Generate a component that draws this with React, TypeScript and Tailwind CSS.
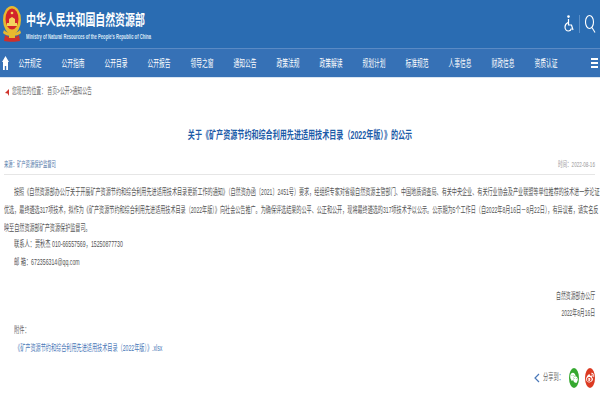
import { FaWeibo, FaWeixin } from 'react-icons/fa';

const cjk = 'font-["Liberation_Sans","Noto_Sans_CJK_SC",sans-serif]';

const navItems = ['公开规定', '公开指南', '公开目录', '公开报告', '领导之窗', '通知公告', '政策法规', '政策解读', '规划计划', '标准规范', '人事信息', '财政信息', '资质认证'];

function Emblem() {
  return (
    <svg width="18" height="36" viewBox="0 0 18 36" className="shrink-0">
      <ellipse cx="9" cy="14" rx="9" ry="14" fill="#e8b92f" />
      <ellipse cx="9" cy="13" rx="6.5" ry="10.5" fill="#d3242a" />
      <path d="M4 17h10v3H4z" fill="#f4d35e" />
      <path d="M6 17v-4l3-2 3 2v4z" fill="#f4d35e" />
      <circle cx="9" cy="7" r="1.3" fill="#f4d35e" />
      <path d="M1 24c3 4 13 4 16 0l1 3c-3 4-15 4-18 0z" fill="#e8b92f" />
      <path d="M2 29c4 3 10 3 14 0l1 6c-4 1-12 1-16 0z" fill="#cf2f2a" />
      <path d="M6 29h6v3H6z" fill="#e8b92f" />
    </svg>
  );
}

export default function App() {
  return (
    <div className={`w-[600px] h-[400px] overflow-hidden bg-white ${cjk}`}>
      {/* header */}
      <div className="h-[48px] bg-[#2a6cb2] flex items-start pl-[3px] pt-[6px] pr-[2px]">
        <Emblem />
        <div className="ml-[5px]">
          <div className="w-[118px] h-[16px] mt-[6px] text-[15px] leading-[16px] font-bold text-white whitespace-nowrap origin-left scale-x-[.66]">中华人民共和国自然资源部</div>
          <div className="h-[8px] mt-[5px] text-[7px] leading-[8px] font-bold text-[#dbe7f5] whitespace-nowrap origin-left scale-x-[.59]">Ministry of Natural Resources of the People&apos;s Republic of China</div>
        </div>
        <div className="ml-auto flex items-center mt-[8px]">
          <svg width="10" height="18" viewBox="0 0 10 18" fill="none" stroke="white" strokeWidth="1.2">
            <circle cx="4.5" cy="1.6" r="1.3" fill="white" stroke="none" />
            <path d="M4.5 4v6h3l1.5 5" />
            <path d="M4 7.5C2 8.5 1 10 1 12c0 2 1.500 4 3.500 4 1.500 0 2.500-1 3-2.500" />
          </svg>
          <div className="w-px h-[18px] bg-[#5a8fc8] mx-[5px]" />
          <svg width="11" height="20" viewBox="0 0 11 20" fill="none" stroke="white" strokeWidth="1.1" className="mr-[2px]">
            <ellipse cx="4.500" cy="8" rx="4" ry="6.500" />
            <path d="M7 13.500l3 5" />
          </svg>
        </div>
      </div>

      {/* nav */}
      <div className="h-[29px] bg-[#3671b6] border-t border-[#5a8ac4] flex items-center pl-[2px] pr-[2px]">
        <svg width="7" height="14" viewBox="0 0 7 14" fill="white" className="shrink-0 mr-[-1px]">
          <path d="M3.500 0L7 6H6v8H4.200v-4H2.800v4H1V6H0z" />
        </svg>
        {navItems.map((item) => (
          <div key={item} className="w-[43px] flex justify-center shrink-0">
            <span className="mt-[1px] text-[10px] leading-[12px] text-white whitespace-nowrap scale-x-[.575]">{item}</span>
          </div>
        ))}
        <div className="ml-auto flex flex-col gap-[2px] w-[7px] shrink-0">
          <div className="h-[2px] bg-white" />
          <div className="h-[2px] bg-white" />
          <div className="h-[2px] bg-white" />
        </div>
      </div>

      <div className="h-[1px] bg-[#d9e5f2]" />

      {/* breadcrumb */}
      <div className="flex items-center h-[28px] pl-[5px]">
        <svg width="4" height="7" viewBox="0 0 4 7" fill="#d0342c" className="mr-[3px]">
          <path d="M4 0v7L2.500 4.500 0 4z" />
        </svg>
        <span className="text-[9px] text-[#666] whitespace-nowrap origin-left scale-x-[.54]">您现在的位置：&nbsp;首页&gt;公开&gt;通知公告</span>
      </div>

      {/* title */}
      <div className="mt-[22px] h-[14px] text-center text-[11px] leading-[14px] font-bold text-[#1c5ba8] whitespace-nowrap scale-x-[.643]">关于《矿产资源节约和综合利用先进适用技术目录（2022年版）》的公示</div>

      {/* source / time */}
      <div className="mt-[16px] ml-[4px] mr-[5px] pb-[2px] border-b border-[#e6e6e6] flex justify-between items-center h-[14px] box-content">
        <span className="text-[8px] text-[#4f77a8] whitespace-nowrap origin-left scale-x-[.54]">来源：矿产资源保护监督司</span>
        <span className="text-[8px] text-[#999] whitespace-nowrap origin-right scale-x-[.57]">时间：2022-08-16</span>
      </div>

      {/* body */}
      <div className="mt-[8px] px-[4px] text-[9px] leading-[18px] text-[#555]">
        <div className="h-[18px] pl-[10px] whitespace-nowrap origin-[10px_50%] scale-x-[.566]">按照《自然资源部办公厅关于开展矿产资源节约和综合利用先进适用技术目录更新工作的通知》（自然资办函〔2021〕2451号）要求，经组织专家对省级自然资源主管部门、中国地质调查局、有关中央企业、有关行业协会及产业联盟等单位推荐的技术进一步论证</div>
        <div className="h-[18px] whitespace-nowrap origin-left scale-x-[.566]">优选，最终遴选317项技术，拟作为《矿产资源节约和综合利用先进适用技术目录（2022年版）》向社会公告推广。为确保评选结果的公平、公正和公开，现将最终遴选的317项技术予以公示。公示期为5个工作日（自2022年8月16日－8月22日），有异议者，请实名反</div>
        <div className="h-[16px] whitespace-nowrap origin-left scale-x-[.566]">映至自然资源部矿产资源保护监督司。</div>
        <div className="h-[18px] pl-[10px] whitespace-nowrap origin-[10px_50%] scale-x-[.58]">联系人：贾秋杰&nbsp;010-66557569，15250877730</div>
        <div className="h-[18px] pl-[10px] whitespace-nowrap origin-[10px_50%] scale-x-[.58]">邮&nbsp;箱：672356314@qq.com</div>
      </div>

      {/* signature */}
      <div className="mt-[17px] px-[5px] text-[9px] leading-[17px] text-[#555] text-right">
        <div className="h-[17px] whitespace-nowrap origin-right scale-x-[.54]">自然资源部办公厅</div>
        <div className="h-[17px] whitespace-nowrap origin-right scale-x-[.54]">2022年8月16日</div>
      </div>

      {/* attachment */}
      <div className="mt-[-1px] px-[14px] text-[9px] leading-[18px]">
        <div className="h-[18px] text-[#666] whitespace-nowrap origin-left scale-x-[.58]">附件：</div>
        <div className="h-[18px] ml-[1px] text-[#4a78b8] whitespace-nowrap origin-left scale-x-[.57]">《矿产资源节约和综合利用先进适用技术目录（2022年版）》.xlsx</div>
      </div>

      {/* share */}
      <div className="mt-[11px] pr-[5px] flex justify-end items-center">
        <svg width="6" height="10" viewBox="0 0 6 10" fill="none" stroke="#4a78b8" strokeWidth="1.200" className="mr-[3px]">
          <path d="M5 1L1 5l4 4" />
        </svg>
        <span className="w-[20px] text-[9px] text-[#666] whitespace-nowrap origin-left scale-x-[.58]">分享到：</span>
        <div className="w-[10px] h-[20px] ml-[6px] rounded-[50%] bg-[#35a82f] flex items-center justify-center">
          <FaWeixin className="text-white w-[8px] h-[12px]" preserveAspectRatio="none" />
        </div>
        <div className="w-[10px] h-[20px] ml-[6px] rounded-[50%] bg-[#dc3a22] flex items-center justify-center">
          <FaWeibo className="text-white w-[8px] h-[12px]" preserveAspectRatio="none" />
        </div>
      </div>
    </div>
  );
}
